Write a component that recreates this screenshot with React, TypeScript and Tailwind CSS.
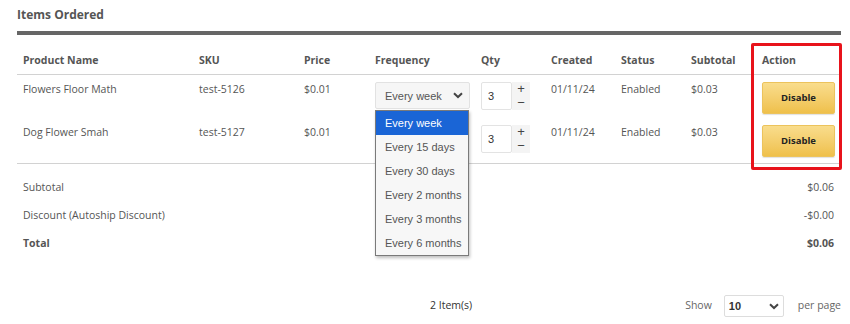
import React from 'react';

const cols = 'grid grid-cols-[176px_105px_71px_106px_70px_70px_70px_71px_85px]';

const rows = [
  { name: 'Flowers Floor Math', sku: 'test-5126' },
  { name: 'Dog Flower Smah', sku: 'test-5127' },
];

const options = ['Every week', 'Every 15 days', 'Every 30 days', 'Every 2 months', 'Every 3 months', 'Every 6 months'];

function Chevron() {
  return (
    <svg width="10" height="7" viewBox="0 0 10 7" className="text-[#444]">
      <path d="M1 1.2 L5 5 L9 1.2" fill="none" stroke="currentColor" strokeWidth="2" />
    </svg>
  );
}

function QtyInput() {
  return (
    <div className="flex items-center">
      <div className="w-[31px] h-[28px] bg-white border border-[#e3e3e3] rounded-[2px] flex items-center pl-[6px] text-[11px] text-[#333] font-['Liberation_Sans',sans-serif]">
        3
      </div>
      <div className="w-[18px] h-[28px] bg-[#f4f4f4] flex flex-col items-center justify-center text-[#444] text-[13px] leading-[14px] font-['Liberation_Sans',sans-serif]">
        <span className="h-[14px]">+</span>
        <span className="h-[14px]">−</span>
      </div>
    </div>
  );
}

function DisableButton() {
  return (
    <button className="w-[73px] h-[32px] rounded-[2px] bg-gradient-to-b from-[#f9dd8c] to-[#efc04a] border border-[#ecc35c] shadow-[0_1px_1px_rgba(0,0,0,0.12)] text-[9.5px] font-bold text-[#222]">
      Disable
    </button>
  );
}

export default function App() {
  return (
    <div className="relative w-[850px] h-[324px] bg-white text-[#555] font-['Open_Sans',sans-serif] overflow-hidden">
      <div className="pl-[17px] pr-[9px]">
        <h2 className="pt-[7px] text-[12px] leading-[16px] font-bold text-[#555]">Items Ordered</h2>
        <div className="mt-[8px] h-[4px] bg-[#666]" />

        {/* header */}
        <div className={`${cols} pt-[18px] pb-[7px] border-b border-[#d2d2d2] text-[10.5px] leading-[14px] font-bold`}>
          {['Product Name', 'SKU', 'Price', 'Frequency', 'Qty', 'Created', 'Status', 'Subtotal', 'Action'].map((h) => (
            <div key={h} className="pl-[6px]">{h}</div>
          ))}
        </div>

        {/* rows */}
        <div className="border-b border-[#d2d2d2]">
          {rows.map((r, i) => (
            <div key={r.sku} className={`${cols} h-[44px] text-[10.5px] leading-[14px] ${i === 0 ? 'pt-[7px]' : 'pt-[6px]'}`}>
              <div className="pl-[6px]">{r.name}</div>
              <div className="pl-[6px]">{r.sku}</div>
              <div className="pl-[6px]">$0.01</div>
              <div className="pl-[6px]">
                {i === 0 && (
                  <div className="w-[95px] h-[27px] bg-[#f6f6f6] border border-[#e2e2e2] rounded-[2px] flex items-center justify-between pl-[9px] pr-[6px] text-[11px] text-[#555] font-['Liberation_Sans',sans-serif]">
                    <span>Every week</span>
                    <Chevron />
                  </div>
                )}
              </div>
              <div className="pl-[6px]">
                <QtyInput />
              </div>
              <div className="pl-[6px]">01/11/24</div>
              <div className="pl-[6px]">Enabled</div>
              <div className="pl-[6px]">$0.03</div>
              <div className="pl-[6px]">
                <DisableButton />
              </div>
            </div>
          ))}
        </div>

        {/* totals */}
        <div className="pt-[9px] pl-[6px] pr-[7px] text-[10.5px] leading-[28px]">
          <div className="flex justify-between">
            <span>Subtotal</span>
            <span>$0.06</span>
          </div>
          <div className="flex justify-between">
            <span>Discount (Autoship Discount)</span>
            <span>-$0.00</span>
          </div>
          <div className="flex justify-between font-bold">
            <span>Total</span>
            <span>$0.06</span>
          </div>
        </div>

        {/* pager */}
        <div className="mt-[36px] flex items-center h-[26px] text-[10.5px]">
          <div className="w-[413px]" />
          <div className="text-[#333]">2 Item(s)</div>
          <div className="flex-1" />
          <span className="text-[#666]">Show</span>
          <div className="ml-[12px] w-[60px] h-[22px] bg-white border border-[#ddd] rounded-[2px] flex items-center justify-between pl-[4px] pr-[4px] text-[11px] font-bold text-[#333] font-['Liberation_Sans',sans-serif]">
            <span>10</span>
            <Chevron />
          </div>
          <span className="ml-[14px] text-[#666]">per page</span>
        </div>
        <div className="mt-[5px] h-[2px] bg-[#ebebeb]" />
      </div>

      {/* open frequency list */}
      <div className="absolute left-[375px] top-[110px] w-[94px] bg-[#f7f7f7] border border-[#7a7a7a] shadow-[1px_2px_3px_rgba(0,0,0,0.25)] text-[11px] font-['Liberation_Sans',sans-serif]">
        {options.map((o, i) => (
          <div
            key={o}
            className={`h-[24px] flex items-center pl-[9px] ${i === 0 ? 'bg-[#1a65d6] text-white' : 'text-[#555]'}`}
          >
            {o}
          </div>
        ))}
      </div>

      {/* annotation */}
      <div className="absolute left-[751px] top-[43px] w-[91px] h-[127px] border-[3px] border-[#e8131b] rounded-[2px]" />
    </div>
  );
}
